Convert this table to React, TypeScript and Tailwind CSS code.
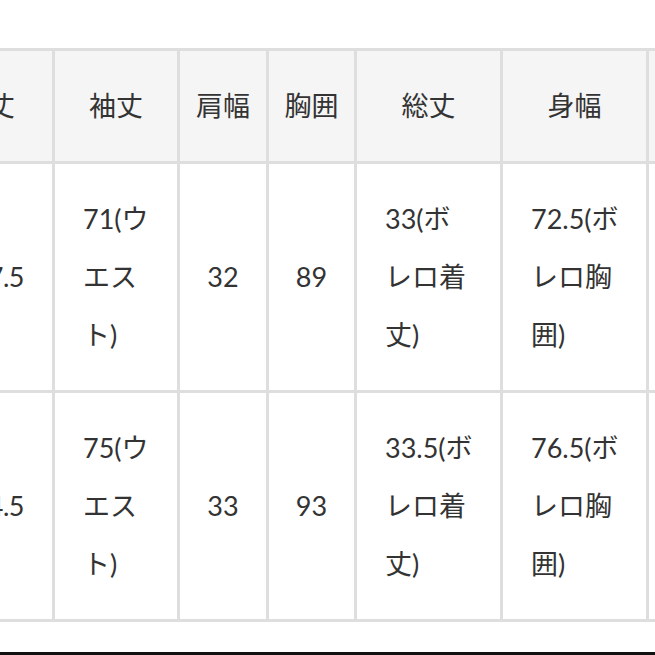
const headers = ["着丈", "袖丈", "肩幅", "胸囲", "総丈", "身幅", "股下"];

type Cell = string | string[];

const rows: Cell[][] = [
  ["107.5", ["71(ウ", "エス", "ト)"], "32", "89", ["33(ボ", "レロ着", "丈)"], ["72.5(ボ", "レロ胸", "囲)"], "70"],
  ["104.5", ["75(ウ", "エス", "ト)"], "33", "93", ["33.5(ボ", "レロ着", "丈)"], ["76.5(ボ", "レロ胸", "囲)"], "72"],
];

const SizeCell = ({ value, first }: { value: Cell; first?: boolean }) => {
  if (Array.isArray(value)) {
    return (
      <div className="bg-white px-[28px] py-[26px] text-left">
        {value.map((line, i) => (
          <div key={i} className="whitespace-nowrap">
            {line}
          </div>
        ))}
      </div>
    );
  }
  if (first) {
    return (
      <div className="bg-white flex items-center justify-end pr-[28px] py-[26px] whitespace-nowrap tracking-[-0.5px]">
        {value}
      </div>
    );
  }
  return (
    <div className="bg-white flex items-center justify-center py-[26px] whitespace-nowrap">
      {value}
    </div>
  );
};

const App = () => {
  return (
    <div className="w-[655px] h-[655px] overflow-hidden bg-white font-['Lato','Noto_Sans_CJK_JP',sans-serif] text-[27px] leading-[58px] text-[#333333]">
      <div className="pt-[48px]">
        {/* size table */}
        <div className="ml-[-79px] w-max grid grid-cols-[128px_122px_86px_85px_143px_143px_120px] gap-[3px] p-[3px] bg-[#dedede]">
          {headers.map((h) => (
            <div key={h} className="bg-[#f5f5f5] py-[26px] text-center whitespace-nowrap">
              {h}
            </div>
          ))}
          {rows.map((row, r) =>
            row.map((cell, c) => <SizeCell key={`${r}-${c}`} value={cell} first={c === 0} />)
          )}
        </div>
        <div className="mt-[30px] h-[3px] bg-[#111111]" />
      </div>
    </div>
  );
};

export default App;
